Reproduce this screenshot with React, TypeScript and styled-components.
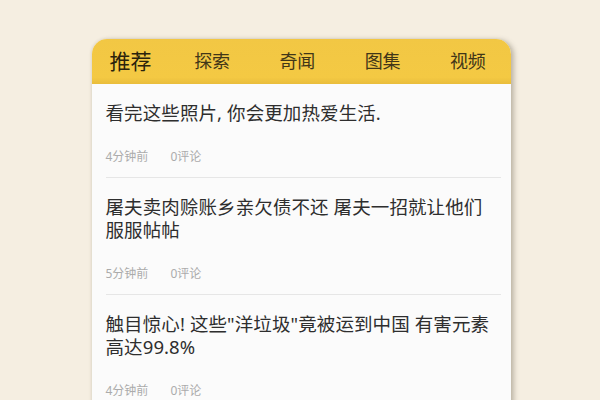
import React from 'react'
import styled, { createGlobalStyle } from 'styled-components';

const GlobalStyle = createGlobalStyle`
  html, body {
    margin:0;
    padding:0;
    background:#f5eee1;
  }
  body {
    font-family: "Noto Sans", "Noto Sans CJK SC", sans-serif;
  }
`;

const Page = styled.div`
  width:600px;
  height:400px;
  overflow:hidden;
  display:flex;
  justify-content:center;
  padding-top:39px;
  box-sizing:border-box;
  background:#f5eee1;
`;

const Card = styled.div`
  width:419px;
  margin-left:2px;
  background:#fbfbfb;
  border-radius:15px 15px 0 0;
  box-shadow: 3px 1px 5px rgba(90, 80, 60, 0.35), -1px 0 3px rgba(90, 80, 60, 0.1);
  align-self:flex-start;
  min-height:380px;
`;

const Tabs = styled.nav`
  height:45px;
  display:grid;
  grid-template-columns:78px repeat(4, 1fr);
  align-items:center;
  background:linear-gradient(#f2c744, #f4c943 85%, #e9bd3c);
  border-radius:15px 15px 0 0;
`;

interface TabProps {
  $active?: boolean;
}

const Tab = styled.div<TabProps>`
  text-align:center;
  color:${({ $active }) => $active ? '#2a220c' : '#413618'};
  font-size:${({ $active }) => $active ? 21 : 18}px;
  font-weight:400;
  line-height:45px;
`;

const List = styled.div`
  padding:0 10px 0 14px;
`;

const Item = styled.div`
  padding:17px 0 13px;
  border-bottom:1px solid #e6e6e6;
`;

const Title = styled.div`
  font-size:18.5px;
  line-height:23px;
  color:#2e2e2e;
  letter-spacing:0.1px;
`;

const Meta = styled.div`
  display:flex;
  gap:22px;
  margin-top:26px;
  font-size:12px;
  line-height:14px;
  color:#ababab;
`;

const tabs = ['推荐', '探索', '奇闻', '图集', '视频'];

const news = [
  { title: '看完这些照片, 你会更加热爱生活.', time: '4分钟前', comments: 0 },
  { title: '屠夫卖肉赊账乡亲欠债不还 屠夫一招就让他们服服帖帖', time: '5分钟前', comments: 0 },
  { title: '触目惊心! 这些"洋垃圾"竟被运到中国 有害元素高达99.8%', time: '4分钟前', comments: 0 },
];

const App = () => {
  return (
    <Page>
      <GlobalStyle />
      <Card>
        <Tabs>
          {tabs.map((t, i) => (
            <Tab key={t} $active={i === 0}>{t}</Tab>
          ))}
        </Tabs>
        <List>
          {news.map((n, i) => (
            <Item key={i}>
              <Title>{n.title}</Title>
              <Meta>
                <span>{n.time}</span>
                <span>{n.comments}评论</span>
              </Meta>
            </Item>
          ))}
        </List>
      </Card>
    </Page>
  )
}

export default App
